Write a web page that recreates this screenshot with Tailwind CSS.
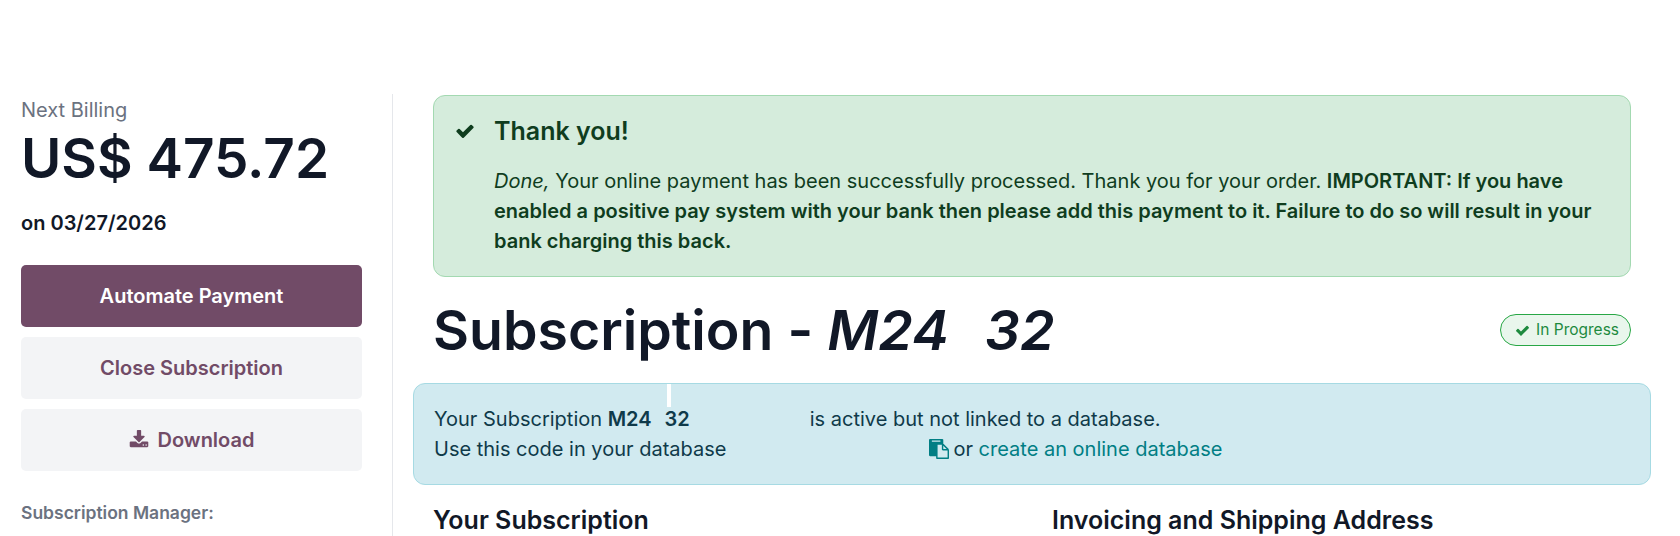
<!DOCTYPE html>
<html lang="en">
<head>
<meta charset="UTF-8">
<title>Subscription</title>
<script src="https://cdn.jsdelivr.net/npm/@tailwindcss/browser@4"></script>
</head>
<body class="bg-white font-['Inter',sans-serif] text-[#111827] overflow-hidden">
<div class="h-[536px] overflow-hidden pt-[94px] flex items-stretch">

  <!-- sidebar -->
  <aside class="w-[393px] shrink-0 pl-[21px] pr-[30px] pt-[3px] border-r border-[#e5e7eb]">
    <div class="text-[20px] leading-[27px] text-[#6b7280]">Next Billing</div>
    <div class="mt-[1px] text-[54.8px] leading-[66px] font-semibold whitespace-nowrap">US$ 475.72</div>
    <div class="mt-[18px] text-[20px] leading-[28px] font-semibold">on 03/27/2026</div>
    <div class="mt-[28px] flex flex-col gap-[10px]">
      <a class="h-[62px] flex items-center justify-center rounded-[5px] bg-[#714b67] text-white text-[20px] font-semibold">Automate Payment</a>
      <a class="h-[62px] flex items-center justify-center rounded-[5px] bg-[#f3f4f6] text-[#714b67] text-[20px] font-semibold">Close Subscription</a>
      <a class="h-[62px] flex items-center justify-center gap-[9px] rounded-[5px] bg-[#f3f4f6] text-[#714b67] text-[20px] font-semibold">
        <svg class="w-[20px] h-[20px] fill-current" viewBox="0 0 1792 1792"><path d="M1344 1344q0-26-19-45t-45-19-45 19-19 45 19 45 45 19 45-19 19-45zm256 0q0-26-19-45t-45-19-45 19-19 45 19 45 45 19 45-19 19-45zm128-224v320q0 40-28 68t-68 28h-1472q-40 0-68-28t-28-68v-320q0-40 28-68t68-28h465l135 136q58 56 136 56t136-56l136-136h464q40 0 68 28t28 68zm-325-569q17 41-14 70l-448 448q-18 19-45 19t-45-19l-448-448q-31-29-14-70 17-39 59-39h256v-448q0-26 19-45t45-19h256q26 0 45 19t19 45v448h256q42 0 59 39z"/></svg>
        Download
      </a>
    </div>
    <div class="mt-[29px] text-[17.5px] leading-[26px] font-semibold text-[#6b7280]">Subscription Manager:</div>
  </aside>

  <!-- main -->
  <main class="flex-1 min-w-0 pl-[40px] pr-[49px] pt-[1px]">
    <div class="w-[1198px] h-[182px] rounded-[12px] border border-[#a3d9b1] bg-[#d5ecdc] pl-[21px] pr-[30px] pt-[19px] flex text-[#0f3d1e]">
      <svg class="w-[20px] h-[20px] mt-[6px] fill-current shrink-0" viewBox="0 0 1792 1792"><path d="M1671 566q0 40-28 68l-724 724-136 136q-28 28-68 28t-68-28l-136-136-362-362q-28-28-28-68t28-68l136-136q28-28 68-28t68 28l294 295 656-657q28-28 68-28t68 28l136 136q28 28 28 68z"/></svg>
      <div class="ml-[19px]">
        <div class="text-[25px] leading-[32px] font-semibold">Thank you!</div>
        <p class="mt-[19px] text-[20px] leading-[30px]"><i>Done,</i> Your online payment has been successfully processed. Thank you for your order. <b class="font-semibold">IMPORTANT: If you have enabled a positive pay system with your bank then please add this payment to it. Failure to do so will result in your bank charging this back.</b></p>
      </div>
    </div>

    <div class="w-[1198px] h-[106px] flex items-center justify-between">
      <h1 class="text-[55.4px] leading-[66px] font-semibold whitespace-nowrap">Subscription - <i>M24<span class="inline-block w-[36px]"></span>32</i></h1>
      <span class="h-[32px] pl-[14px] pr-[11px] rounded-full border border-[#28a745] bg-[#e9f6ec] text-[#1e8a3e] text-[15.5px] flex items-center gap-[6px]">
        <svg class="w-[15px] h-[15px] fill-current" viewBox="0 0 1792 1792"><path d="M1671 566q0 40-28 68l-724 724-136 136q-28 28-68 28t-68-28l-136-136-362-362q-28-28-28-68t28-68l136-136q28-28 68-28t68 28l294 295 656-657q28-28 68-28t68 28l136 136q28 28 28 68z"/></svg>
        In Progress
      </span>
    </div>

    <div class="relative -ml-[20px] w-[1238px] h-[102px] rounded-[12px] border border-[#a6dae3] bg-[#d1eaf0] pl-[20px] pt-[20px] text-[20px] leading-[30px] text-[#0f3a4a] whitespace-nowrap">
      <span class="absolute left-[253px] top-0 w-[4px] h-[23px] bg-white"></span>
      <div>Your Subscription <b class="font-semibold">M24<span class="inline-block w-[13px]"></span>32</b><span class="inline-block w-[120px]"></span>is active but not linked to a database.</div>
      <div class="flex items-center">Use this code in your database
        <svg class="w-[20px] h-[20px] ml-[203px] fill-[#017e84] shrink-0" viewBox="0 0 1792 1792"><path d="M768 1664h896v-640h-416q-40 0-68-28t-28-68v-416h-384v1152zm256-1440v-64q0-13-9.5-22.5t-22.5-9.5h-704q-13 0-22.5 9.5t-9.5 22.5v64q0 13 9.5 22.5t22.5 9.5h704q13 0 22.5-9.5t9.5-22.5zm256 672h299l-299-299v299zm512 128v672q0 40-28 68t-68 28h-960q-40 0-68-28t-28-68v-160h-544q-40 0-68-28t-28-68v-1344q0-40 28-68t68-28h1088q40 0 68 28t28 68v328q21 13 36 28l408 408q28 28 48 76t20 88z"/></svg>
        <span class="ml-[4px]">or&nbsp;</span><a class="text-[#017e84]">create an online database</a>
      </div>
    </div>

    <div class="mt-[19px] grid grid-cols-[619px_1fr] text-[25px] leading-[32px] font-semibold">
      <h2>Your Subscription</h2>
      <h2>Invoicing and Shipping Address</h2>
    </div>
  </main>
</div>
</body>
</html>
